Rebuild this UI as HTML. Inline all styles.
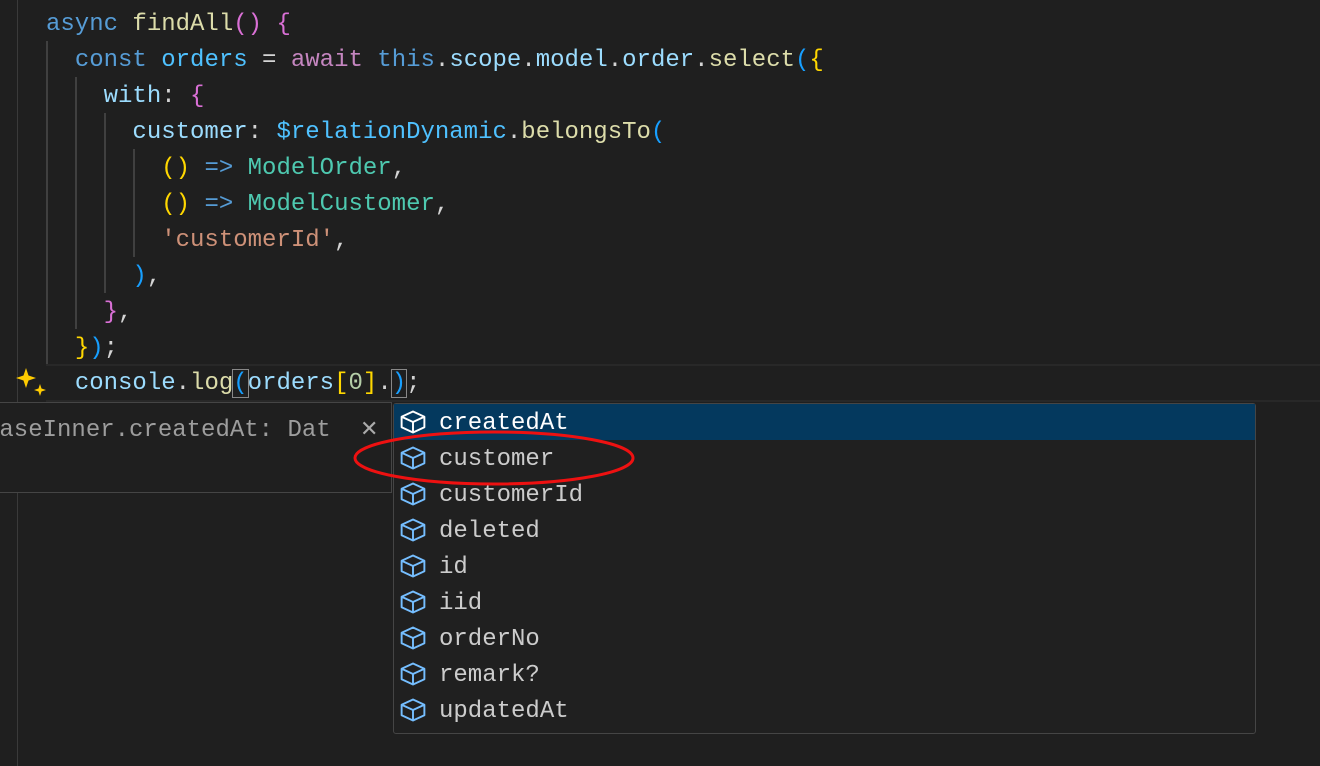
<!DOCTYPE html>
<html><head><meta charset="utf-8"><style>
body{margin:0;width:1320px;height:766px;background:#1f1f1f;overflow:hidden;position:relative;font-family:"Liberation Mono","DejaVu Sans Mono",monospace;font-size:24px}
.l{position:absolute;left:46px;height:36px;line-height:36px;white-space:pre;color:#d4d4d4}
.g{position:absolute;width:2px;background:#404040}
.k{color:#569cd6}.f{color:#dcdcaa}.p{color:#da70d6}.v{color:#9cdcfe}.c{color:#4fc1ff}.t{color:#4ec9b0}.y{color:#ffd700}.s{color:#ce9178}.aw{color:#c586c0}.b{color:#179fff}.n{color:#b5cea8}
.sug{position:absolute;left:393px;top:403px;width:861px;height:329px;border:1px solid #454545;border-radius:3px;background:#202020}
.row{position:absolute;left:0;width:861px;height:36px;line-height:36px;color:#cccccc}
.row svg{position:absolute;left:5px;top:4px}
.row span{position:absolute;left:45px;top:2px}
</style></head><body>
<div class="g" style="left:17px;top:0;height:766px;width:1px;background:#3a3a3a"></div>
<div class="g" style="left:46px;top:41px;height:324px"></div>
<div class="g" style="left:75px;top:77px;height:252px"></div>
<div class="g" style="left:104px;top:113px;height:180px"></div>
<div class="g" style="left:133px;top:149px;height:108px"></div>
<div style="position:absolute;left:46px;top:364px;width:1274px;height:34px;border-top:2px solid #282828;border-bottom:2px solid #282828"></div>
<div class="l" style="top:7px"><span class="k">async</span> <span class="f">findAll</span><span class="p">()</span> <span class="p">{</span></div>
<div class="l" style="top:43px">  <span class="k">const</span> <span class="c">orders</span> = <span class="aw">await</span> <span class="k">this</span>.<span class="v">scope</span>.<span class="v">model</span>.<span class="v">order</span>.<span class="f">select</span><span class="b">(</span><span class="y">{</span></div>
<div class="l" style="top:79px">    <span class="v">with</span>: <span class="p">{</span></div>
<div class="l" style="top:115px">      <span class="v">customer</span>: <span class="c">$relationDynamic</span>.<span class="f">belongsTo</span><span class="b">(</span></div>
<div class="l" style="top:151px">        <span class="y">()</span> <span class="k">=&gt;</span> <span class="t">ModelOrder</span>,</div>
<div class="l" style="top:187px">        <span class="y">()</span> <span class="k">=&gt;</span> <span class="t">ModelCustomer</span>,</div>
<div class="l" style="top:223px">        <span class="s">'customerId'</span>,</div>
<div class="l" style="top:259px">      <span class="b">)</span>,</div>
<div class="l" style="top:295px">    <span class="p">}</span>,</div>
<div class="l" style="top:331px">  <span class="y">}</span><span class="b">)</span>;</div>
<div class="l" style="top:366px">  <span class="v">console</span>.<span class="f">log</span><span class="b" style="outline:1px solid #888;">(</span><span class="v">orders</span><span class="y">[</span><span class="n">0</span><span class="y">]</span>.<span class="b" style="outline:1px solid #888;">)</span>;</div>
<svg style="position:absolute;left:16px;top:366px" width="32" height="32" viewBox="0 0 32 32"><path d="M10 2 L12.5 9.5 L20 12 L12.5 14.5 L10 22 L7.5 14.5 L0 12 L7.5 9.5Z" fill="#ffcc00"/><path d="M24 18 L25.5 22.5 L30 24 L25.5 25.5 L24 30 L22.5 25.5 L18 24 L22.5 22.5Z" fill="#ffcc00"/></svg>
<div style="position:absolute;left:0;top:402px;width:391px;height:89px;border-top:1px solid #454545;border-bottom:1px solid #454545;border-right:1px solid #454545;background:#1f1f1f"></div>
<div style="position:absolute;left:-15px;top:413px;line-height:36px;color:#9d9d9d;white-space:pre">BaseInner.createdAt: Dat</div>
<div style="position:absolute;left:360px;top:412px;line-height:36px;color:#aaa;font-family:'DejaVu Sans',sans-serif;font-size:22px">✕</div>
<div class="sug">
<div class="row" style="top:0;background:#04395e;color:#fff"><svg width="28" height="28" viewBox="0 0 16 16" fill="none" stroke="#fff" stroke-width="1.1" stroke-linejoin="round"><path d="M1.5 5 L8 2 L14.5 5 L14.5 11 L8 14 L1.5 11Z M1.5 5 L8 8 L14.5 5 M8 8 L8 14"/></svg><span>createdAt</span></div>
<div class="row" style="top:36px"><svg width="28" height="28" viewBox="0 0 16 16" fill="none" stroke="#75beff" stroke-width="1.1" stroke-linejoin="round"><path d="M1.5 5 L8 2 L14.5 5 L14.5 11 L8 14 L1.5 11Z M1.5 5 L8 8 L14.5 5 M8 8 L8 14"/></svg><span>customer</span></div>
<div class="row" style="top:72px"><svg width="28" height="28" viewBox="0 0 16 16" fill="none" stroke="#75beff" stroke-width="1.1" stroke-linejoin="round"><path d="M1.5 5 L8 2 L14.5 5 L14.5 11 L8 14 L1.5 11Z M1.5 5 L8 8 L14.5 5 M8 8 L8 14"/></svg><span>customerId</span></div>
<div class="row" style="top:108px"><svg width="28" height="28" viewBox="0 0 16 16" fill="none" stroke="#75beff" stroke-width="1.1" stroke-linejoin="round"><path d="M1.5 5 L8 2 L14.5 5 L14.5 11 L8 14 L1.5 11Z M1.5 5 L8 8 L14.5 5 M8 8 L8 14"/></svg><span>deleted</span></div>
<div class="row" style="top:144px"><svg width="28" height="28" viewBox="0 0 16 16" fill="none" stroke="#75beff" stroke-width="1.1" stroke-linejoin="round"><path d="M1.5 5 L8 2 L14.5 5 L14.5 11 L8 14 L1.5 11Z M1.5 5 L8 8 L14.5 5 M8 8 L8 14"/></svg><span>id</span></div>
<div class="row" style="top:180px"><svg width="28" height="28" viewBox="0 0 16 16" fill="none" stroke="#75beff" stroke-width="1.1" stroke-linejoin="round"><path d="M1.5 5 L8 2 L14.5 5 L14.5 11 L8 14 L1.5 11Z M1.5 5 L8 8 L14.5 5 M8 8 L8 14"/></svg><span>iid</span></div>
<div class="row" style="top:216px"><svg width="28" height="28" viewBox="0 0 16 16" fill="none" stroke="#75beff" stroke-width="1.1" stroke-linejoin="round"><path d="M1.5 5 L8 2 L14.5 5 L14.5 11 L8 14 L1.5 11Z M1.5 5 L8 8 L14.5 5 M8 8 L8 14"/></svg><span>orderNo</span></div>
<div class="row" style="top:252px"><svg width="28" height="28" viewBox="0 0 16 16" fill="none" stroke="#75beff" stroke-width="1.1" stroke-linejoin="round"><path d="M1.5 5 L8 2 L14.5 5 L14.5 11 L8 14 L1.5 11Z M1.5 5 L8 8 L14.5 5 M8 8 L8 14"/></svg><span>remark?</span></div>
<div class="row" style="top:288px"><svg width="28" height="28" viewBox="0 0 16 16" fill="none" stroke="#75beff" stroke-width="1.1" stroke-linejoin="round"><path d="M1.5 5 L8 2 L14.5 5 L14.5 11 L8 14 L1.5 11Z M1.5 5 L8 8 L14.5 5 M8 8 L8 14"/></svg><span>updatedAt</span></div>
</div>
<svg style="position:absolute;left:352px;top:428px" width="290" height="62"><ellipse cx="142" cy="30" rx="139" ry="26" fill="none" stroke="#ee1111" stroke-width="3"/></svg>
</body></html>
